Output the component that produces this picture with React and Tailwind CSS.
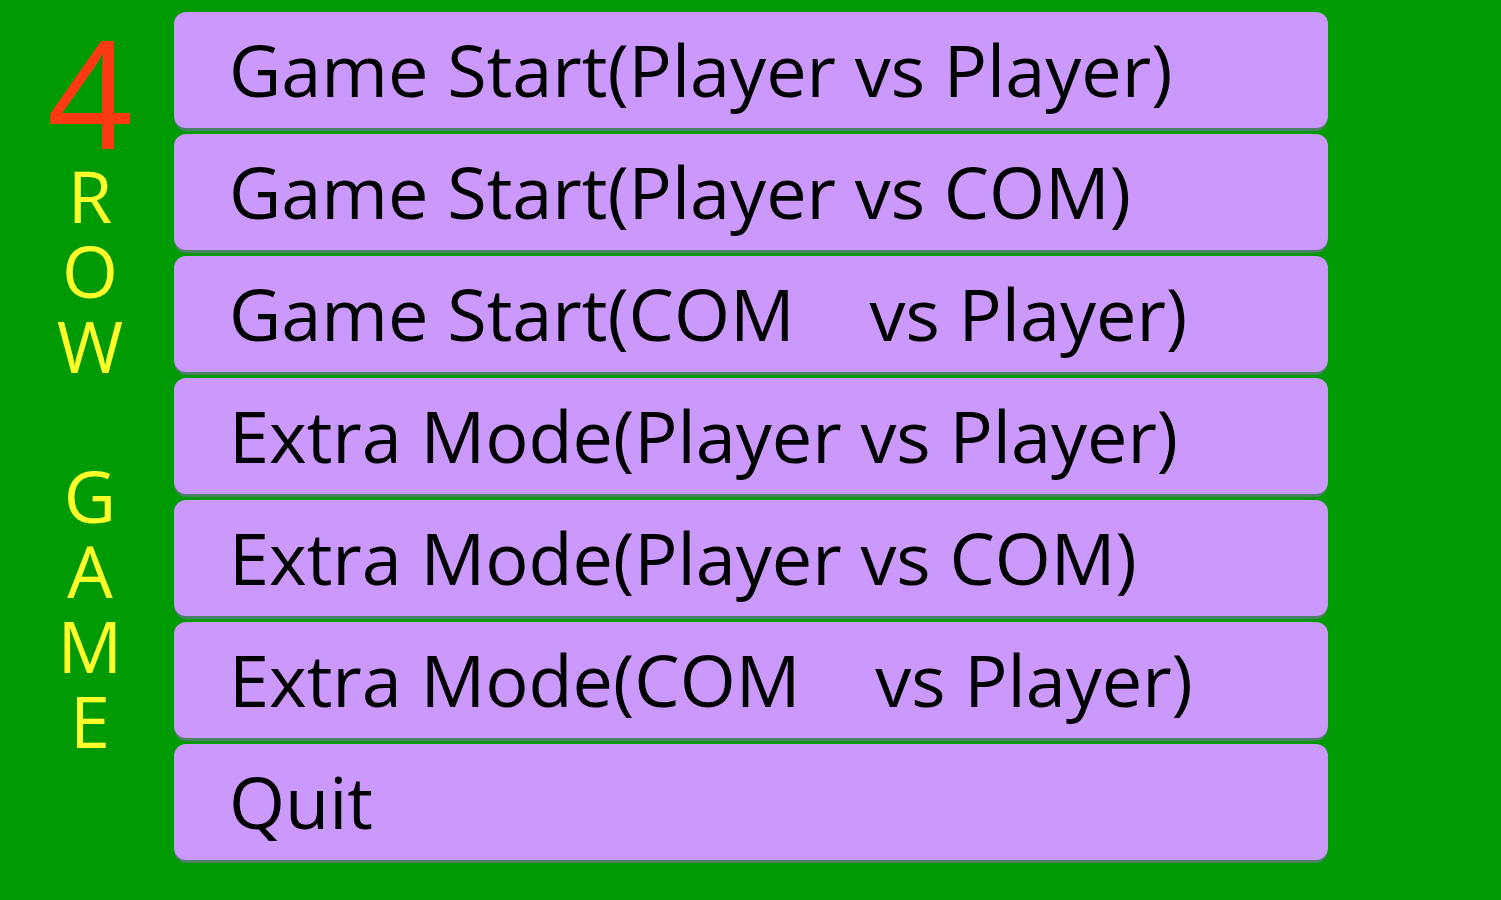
const MENU = [
  'Game Start(Player vs Player)',
  'Game Start(Player vs COM)',
  'Game Start(COM    vs Player)',
  'Extra Mode(Player vs Player)',
  'Extra Mode(Player vs COM)',
  'Extra Mode(COM    vs Player)',
  'Quit',
]

const TITLE = ['R', 'O', 'W', ' ', 'G', 'A', 'M', 'E']

export default function App() {
  return (
    <div
      className="w-[1501px] h-[900px] bg-[#009a05] flex overflow-hidden"
      style={{ fontFamily: '"Open Sans", "DejaVu Sans", sans-serif' }}
    >
      <div className="w-[174px] flex flex-col items-center pl-[6px] pt-[16px]">
        <span className="text-[#ff3a12] text-[150px] leading-[150px] font-normal">4</span>
        <div className="flex flex-col items-center mt-[-8px]">
          {TITLE.map((c, i) => (
            <span key={i} className="text-[#ffff2a] text-[72px] leading-[75px] h-[75px]">
              {c}
            </span>
          ))}
        </div>
      </div>

      <div className="w-[1154px] flex flex-col gap-[6px] pt-[12px]">
        {MENU.map((label) => (
          <button
            key={label}
            className="h-[116px] bg-[#cb99fb] rounded-[12px] text-left pl-[55px] pb-[2px] text-black text-[72px] leading-none whitespace-pre shadow-[0_4px_0_-1px_#4a8064]"
          >
            {label}
          </button>
        ))}
      </div>
    </div>
  )
}
